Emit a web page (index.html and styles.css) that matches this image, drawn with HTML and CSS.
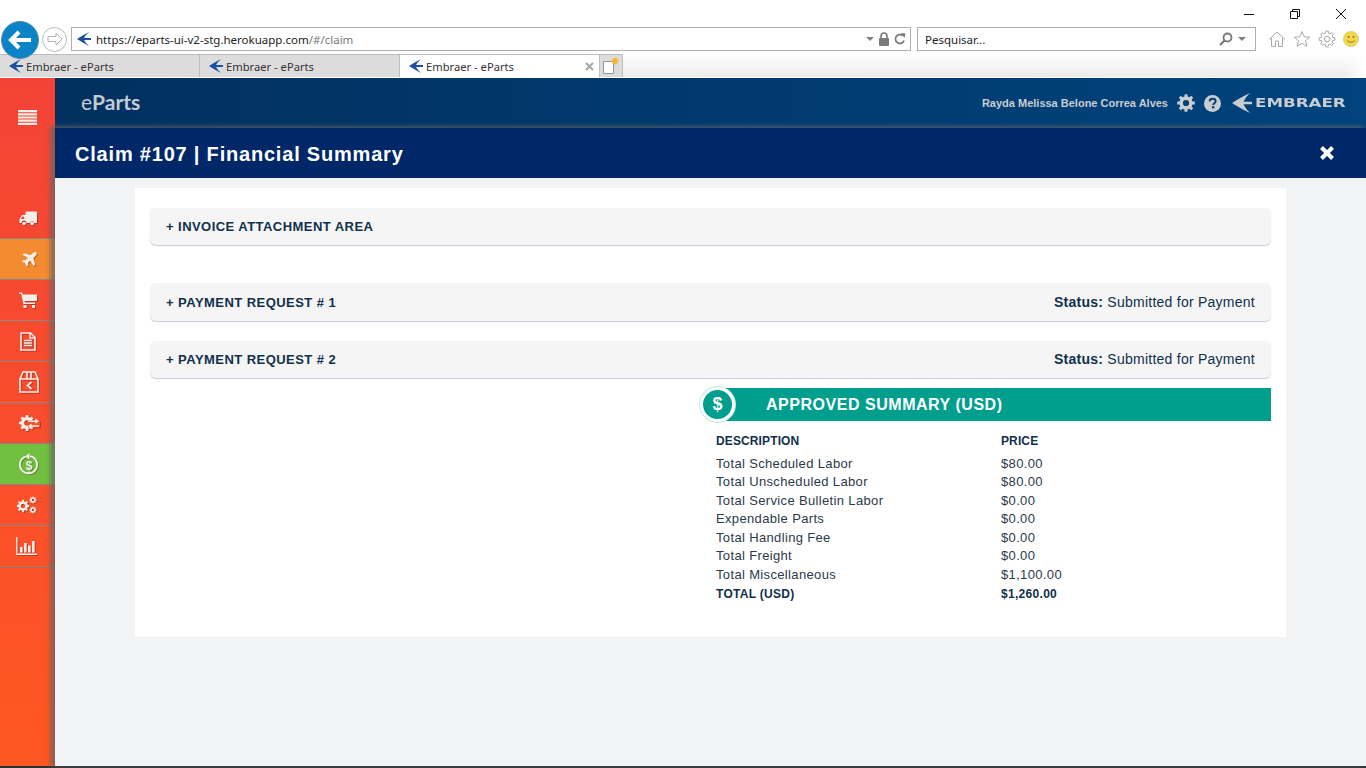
FILE: index.html
```html
<!DOCTYPE html>
<html lang="pt-BR">
<head>
  <meta charset="UTF-8">
  <title>Embraer - eParts</title>
  <link rel="stylesheet" href="styles.css">
</head>
<body>

  <svg class="defs" width="0" height="0">
    <defs>
      <symbol id="fav" viewBox="0 0 15 15">
        <path d="M0 7.5C4 5 8 2.5 13 0C10.5 2 9 4 7.5 6.4H15V8.6H7.5C9 11 10.5 13 13 15C8 12.5 4 10 0 7.5Z" fill="#1c4fa0"/>
      </symbol>
      <symbol id="gear" viewBox="0 0 18 18">
        <path fill-rule="evenodd" fill="currentColor" d="M14.82 7.55L16.9 7.75V10.25L14.82 10.45L14.14 12.09L15.47 13.7L13.7 15.47L12.09 14.14L10.45 14.82L10.25 16.9H7.75L7.55 14.82L5.91 14.14L4.3 15.47L2.53 13.7L3.86 12.09L3.18 10.45L1.1 10.25V7.75L3.18 7.55L3.86 5.91L2.53 4.3L4.3 2.53L5.91 3.86L7.55 3.18L7.75 1.1H10.25L10.45 3.18L12.09 3.86L13.7 2.53L15.47 4.3L14.14 5.91ZM9 6.2A2.8 2.8 0 1 0 9 11.8A2.8 2.8 0 1 0 9 6.2Z"/>
      </symbol>
    </defs>
  </svg>

  <!-- barra do navegador -->
  <div class="browser">
    <div class="win-controls">
      <svg width="12" height="12" viewBox="0 0 12 12"><path d="M1 6.5H11" stroke="#111" fill="none"/></svg>
      <svg width="12" height="12" viewBox="0 0 12 12"><path d="M1.5 3.5H8.5V10.5H1.5ZM3.5 3.5V1.5H10.5V8.5H8.5" stroke="#111" fill="none"/></svg>
      <svg width="12" height="12" viewBox="0 0 12 12"><path d="M1 1L11 11M11 1L1 11" stroke="#111" fill="none"/></svg>
    </div>

    <div class="nav-row">
      <div class="nav-btns">
        <div class="btn-back">
          <svg width="26" height="22" viewBox="0 0 26 22"><path d="M12 3L4 11L12 19M4 11H24" stroke="#fff" stroke-width="4" fill="none"/></svg>
        </div>
        <div class="btn-forward">
          <svg width="16" height="14" viewBox="0 0 16 14"><path d="M9 1L15 7L9 13V9.5H1V4.5H9Z" stroke="#b5b5b5" fill="none"/></svg>
        </div>
      </div>

      <div class="address">
        <svg class="favicon" width="14" height="14"><use href="#fav"/></svg>
        <span class="url">https://eparts-ui-v2-stg.herokuapp.com<span class="url-rest">/#/claim</span></span>
        <span class="caret"></span>
        <svg width="12" height="14" viewBox="0 0 12 14"><path d="M3 6V4a3 3 0 0 1 6 0V6" stroke="#7a7a7a" stroke-width="1.6" fill="none"/><rect x="1" y="6" width="10" height="8" rx="1" fill="#7a7a7a"/></svg>
        <svg width="12" height="12" viewBox="0 0 12 12"><path d="M10 7.5A4.4 4.4 0 1 1 8.6 2.6" stroke="#7a7a7a" stroke-width="1.8" fill="none"/><path d="M7 0L11.5 0.5L10.5 5Z" fill="#7a7a7a"/></svg>
      </div>

      <div class="search">
        <span class="search-text">Pesquisar...</span>
        <svg width="14" height="14" viewBox="0 0 14 14"><circle cx="8.5" cy="5.5" r="4" stroke="#777" stroke-width="1.8" fill="none"/><path d="M5.5 8.5L1 13" stroke="#777" stroke-width="2.2"/></svg>
        <span class="caret"></span>
      </div>

      <div class="tools">
        <svg width="18" height="18" viewBox="0 0 18 18"><path d="M1 9.5L9 2L17 9.5M3.5 8V16.5H7.5V11H10.5V16.5H14.5V8" stroke="#a9a9a9" fill="none"/></svg>
        <svg width="18" height="18" viewBox="0 0 18 18"><path d="M9 1.5L11.2 6.8L16.8 7.2L12.5 10.8L13.9 16.4L9 13.4L4.1 16.4L5.5 10.8L1.2 7.2L6.8 6.8Z" stroke="#a9a9a9" fill="none"/></svg>
        <svg width="18" height="18" viewBox="0 0 18 18"><path fill="none" stroke="#a9a9a9" d="M14.82 7.55L16.9 7.75V10.25L14.82 10.45L14.14 12.09L15.47 13.7L13.7 15.47L12.09 14.14L10.45 14.82L10.25 16.9H7.75L7.55 14.82L5.91 14.14L4.3 15.47L2.53 13.7L3.86 12.09L3.18 10.45L1.1 10.25V7.75L3.18 7.55L3.86 5.91L2.53 4.3L4.3 2.53L5.91 3.86L7.55 3.18L7.75 1.1H10.25L10.45 3.18L12.09 3.86L13.7 2.53L15.47 4.3L14.14 5.91Z"/><circle cx="9" cy="9" r="2.8" fill="none" stroke="#a9a9a9"/></svg>
        <svg width="16" height="16" viewBox="0 0 16 16"><circle cx="8" cy="8" r="7.7" fill="#f2d64b" stroke="#c9c9a0" stroke-width=".6"/><circle cx="5.6" cy="6" r="1" fill="#8a7a20"/><circle cx="10.4" cy="6" r="1" fill="#8a7a20"/><path d="M4.4 9.6Q8 13 11.6 9.6" stroke="#8a7a20" fill="none"/></svg>
      </div>
    </div>

    <div class="tab-row">
      <div class="tab">
        <svg width="14" height="14"><use href="#fav"/></svg>
        <span>Embraer - eParts</span>
      </div>
      <div class="tab">
        <svg width="14" height="14"><use href="#fav"/></svg>
        <span>Embraer - eParts</span>
      </div>
      <div class="tab tab-ativa">
        <svg width="14" height="14"><use href="#fav"/></svg>
        <span>Embraer - eParts</span>
        <svg class="tab-close" width="9" height="9" viewBox="0 0 9 9"><path d="M1 1L8 8M8 1L1 8" stroke="#a8a8a8" stroke-width="2"/></svg>
      </div>
      <div class="tab-new">
        <svg width="18" height="18" viewBox="0 0 18 18"><path d="M1.500 4.500H11.500V16.500H1.500Z" fill="#fff" stroke="#9a9a9a"/><path d="M13 0.500V7.500M9.500 4H16.500M10.600 1.500L15.400 6.500M15.400 1.500L10.600 6.500" stroke="#f4b324" stroke-width="1.4"/></svg>
      </div>
    </div>
  </div>

  <div class="app">
    <nav class="sidebar">
      <div class="menu-toggle">
        <svg width="19" height="15" viewBox="0 0 19 15"><path d="M0 0H19V2.2H0ZM0 3.2H19V5.4H0ZM0 6.4H19V8.6H0ZM0 9.6H19V11.8H0ZM0 12.8H19V15H0Z" fill="#f6eeea"/></svg>
      </div>

      <div class="side-item">
        <svg width="18" height="15" viewBox="0 0 18 15"><path d="M6.5 1.5Q6.5 0.5 7.5 0.5H17Q18 0.5 18 1.5V12H15.5A2.5 2.5 0 0 0 11 12H7.5A2.5 2.5 0 0 0 2.5 12H0.5V8L3 4H6.5Z" fill="currentColor"/><circle cx="5" cy="12.5" r="1.8" fill="currentColor"/><circle cx="13.2" cy="12.5" r="1.8" fill="currentColor"/><path d="M3.5 5.5H5.2V8H1.8Z" fill="#f44a35"/></svg>
      </div>
      <div class="side-item item-laranja">
        <svg class="icon-direita" width="15" height="15" viewBox="0 0 15 15"><path d="M14.5 0.5C13.5 -0.5 11.8 0 10.4 1.4L8.6 3.2L2.2 1.2L0.6 2.8L5.8 6L3.6 8.3L1.4 8L0 9.4L3 11.2L4.8 14.6L6.2 13.2L5.9 10.8L8.2 8.6L11.6 14L13.2 12.4L11.2 6L13.2 4.2C14.6 2.8 15.4 1.4 14.5 0.5Z" fill="currentColor"/></svg>
      </div>
      <div class="side-item">
        <svg width="18" height="16" viewBox="0 0 18 16"><path d="M0 0.5H3L4 2.5H18V9H5.5L6 10.5H16V12H4.5L2.2 2H0Z" fill="currentColor"/><rect x="4.5" y="13" width="3" height="3" fill="currentColor"/><rect x="13" y="13" width="3" height="3" fill="currentColor"/></svg>
      </div>
      <div class="side-item">
        <svg width="16" height="19" viewBox="0 0 16 19"><path d="M1 1H10.5L15 5.5V18H1Z" fill="none" stroke="currentColor" stroke-width="1.6"/><path d="M10 1V6H15M4 8.5H12M4 11H12M4 13.5H12" fill="none" stroke="currentColor" stroke-width="1.4"/></svg>
      </div>
      <div class="side-item">
        <svg class="icon-direita" width="20" height="22" viewBox="0 0 20 22"><path d="M1 8L4 1H16L19 8V21H1ZM1 8H19M8 1V8M12 1V8" fill="none" stroke="currentColor" stroke-width="1.6"/><path d="M12.5 11L8.5 14.5L12.5 18" fill="none" stroke="currentColor" stroke-width="1.8"/></svg>
      </div>
      <div class="side-item">
        <svg class="icon-direita" width="22" height="18" viewBox="0 0 22 18">
          <use href="#gear" width="18" height="18"/>
          <path d="M10 6.6H22V13.4H10Z" fill="#fb4d2a"/>
          <path d="M10 7.2H18M13 12H21" stroke="currentColor" stroke-width="1.6"/>
          <path d="M17.5 4.6L21 7.2L17.5 9.8ZM13.5 9.4L10 12L13.5 14.6Z" fill="currentColor"/>
        </svg>
      </div>
      <div class="side-item item-verde">
        <svg class="icon-direita" width="20" height="22" viewBox="0 0 20 22"><path d="M6.5 3.6A8.6 8.6 0 1 0 11 3.2" fill="none" stroke="currentColor" stroke-width="1.8"/><path d="M10.5 0L6 3.4L10.5 6.4Z" fill="currentColor"/><text class="icon-dolar" x="10" y="16.5" text-anchor="middle">$</text></svg>
      </div>
      <div class="side-item">
        <svg class="icon-esquerda" width="21" height="18" viewBox="0 0 21 18">
          <use href="#gear" x="0" y="3" width="14" height="14"/>
          <use href="#gear" x="13" y="0" width="8" height="8"/>
          <use href="#gear" x="13" y="10" width="8" height="8"/>
        </svg>
      </div>
      <div class="side-item">
        <svg class="icon-esquerda" width="21" height="18" viewBox="0 0 21 18"><path d="M0.8 0V17.2H21" fill="none" stroke="currentColor" stroke-width="1.4"/><path d="M4 10H6.6V15.6H4ZM8 6H10.6V15.6H8ZM12 8.5H14.6V15.6H12ZM16 4H18.6V15.6H16Z" fill="currentColor"/></svg>
      </div>
    </nav>

    <div class="main">
      <header class="topbar">
        <div class="brand"><span class="brand-e">e</span>Parts</div>
        <div class="user-area">
          <span class="user-name">Rayda Melissa Belone Correa Alves</span>
          <svg class="top-gear" width="20" height="20"><use href="#gear"/></svg>
          <svg width="17" height="17" viewBox="0 0 17 17"><circle cx="8.5" cy="8.5" r="8.5" fill="#c9cdd1"/><path d="M5.6 6.4C5.8 4.6 7 3.8 8.6 3.8C10.4 3.8 11.6 4.8 11.6 6.2C11.6 8.2 9.2 8.2 9.2 10" fill="none" stroke="#0a3d6e" stroke-width="2"/><rect x="8" y="11.2" width="2.4" height="2.2" fill="#0a3d6e"/></svg>
          <div class="logo">
            <svg width="20" height="20" viewBox="0 0 20 20"><path d="M0 10C5 7 11 3 18 0C15 3 13 5.5 11.5 8.7H20V11.3H11.5C13 14.5 15 17 18 20C11 17 5 13 0 10Z" fill="#c9cdd1"/></svg>
            <span class="logo-text">EMBRAER</span>
          </div>
        </div>
      </header>

      <section class="panel">
        <div class="panel-title">
          <h1>Claim #107 | Financial Summary</h1>
          <svg width="16" height="16" viewBox="0 0 16 16"><path d="M2.5 2.5L13.5 13.5M13.5 2.5L2.5 13.5" stroke="#fff" stroke-width="4"/></svg>
        </div>

        <div class="panel-body">
          <div class="card">
            <div class="acordeao acordeao-invoice">
              <span class="acordeao-titulo">+ INVOICE ATTACHMENT AREA</span>
            </div>
            <div class="acordeao acordeao-req1">
              <span class="acordeao-titulo">+ PAYMENT REQUEST # 1</span>
              <span class="status"><b>Status:</b> Submitted for Payment</span>
            </div>
            <div class="acordeao acordeao-req2">
              <span class="acordeao-titulo">+ PAYMENT REQUEST # 2</span>
              <span class="status"><b>Status:</b> Submitted for Payment</span>
            </div>

            <div class="resumo">
              <div class="resumo-head">
                <div class="resumo-icone">$</div>
                <h2>APPROVED SUMMARY (USD)</h2>
              </div>
              <div class="resumo-cols resumo-titulos">
                <span>DESCRIPTION</span><span>PRICE</span>
              </div>
              <div class="resumo-cols"><span>Total Scheduled Labor</span><span>$80.00</span></div>
              <div class="resumo-cols"><span>Total Unscheduled Labor</span><span>$80.00</span></div>
              <div class="resumo-cols"><span>Total Service Bulletin Labor</span><span>$0.00</span></div>
              <div class="resumo-cols"><span>Expendable Parts</span><span>$0.00</span></div>
              <div class="resumo-cols"><span>Total Handling Fee</span><span>$0.00</span></div>
              <div class="resumo-cols"><span>Total Freight</span><span>$0.00</span></div>
              <div class="resumo-cols"><span>Total Miscellaneous</span><span>$1,100.00</span></div>
              <div class="resumo-cols resumo-total"><span>TOTAL (USD)</span><span>$1,260.00</span></div>
            </div>
          </div>
        </div>
      </section>
    </div>
  </div>

</body>
</html>
```

FILE: styles.css
```css
* {
  box-sizing: border-box;
}

html, body {
  height: 100%;
}

body {
  margin: 0;
  height: 768px;
  overflow: hidden;
  display: flex;
  flex-direction: column;
  font-family: "Liberation Sans", Arial, sans-serif;
  background-color: #fff;
}

.defs {
  position: absolute;
}

/* navegador */
.browser {
  height: 78px;
  flex: none;
  background-color: #fff;
  font-family: "Noto Sans", sans-serif;
  font-size: 11.5px;
  color: #222;
}

.win-controls {
  height: 27px;
  display: flex;
  justify-content: flex-end;
  gap: 34px;
  padding: 8px 19px 0 0;
}

.nav-row {
  height: 24px;
  display: flex;
  align-items: center;
}

.nav-btns {
  width: 71px;
  height: 24px;
  flex: none;
  display: flex;
  align-items: center;
  padding-left: 1px;
  gap: 3px;
}

.btn-back {
  width: 38px;
  height: 38px;
  flex: none;
  margin-top: 1px;
  border-radius: 50%;
  background-color: #0a84c6;
  border: 1px solid #5a8aa8;
  display: flex;
  align-items: center;
  justify-content: center;
  position: relative;
  z-index: 2;
}

.btn-forward {
  width: 25px;
  height: 25px;
  flex: none;
  border-radius: 50%;
  border: 1px solid #bbb;
  display: flex;
  align-items: center;
  justify-content: center;
}

.address {
  width: 840px;
  height: 24px;
  border: 1px solid #aeaeae;
  display: flex;
  align-items: center;
  gap: 4px;
  padding: 0 4px 0 5px;
}

.favicon {
  flex: none;
  margin-right: 1px;
}

.url {
  flex: 1;
  color: #222;
}

.url-rest {
  color: #777;
}

.caret {
  width: 0;
  height: 0;
  border-left: 4px solid transparent;
  border-right: 4px solid transparent;
  border-top: 4px solid #808080;
}

.search {
  width: 339px;
  height: 24px;
  margin-left: 6px;
  border: 1px solid #aeaeae;
  display: flex;
  align-items: center;
  gap: 5px;
  padding: 0 9px 0 7px;
}

.search-text {
  flex: 1;
}

.tools {
  display: flex;
  align-items: center;
  gap: 7px;
  padding-left: 12px;
}

.tab-row {
  height: 24px;
  margin-top: 3px;
  display: flex;
  font-size: 11.2px;
  background: linear-gradient(90deg, transparent 98.5%, #fff), linear-gradient(#fff, #ececec);
  border-bottom: 1px solid #fff;
}

.tab {
  width: 200px;
  height: 23px;
  display: flex;
  align-items: center;
  gap: 3px;
  padding-left: 9px;
  background-color: #dcdcdc;
  border: 1px solid #bdbdbd;
  border-bottom: none;
  border-left: none;
  color: #333;
}

.tab-ativa {
  background-color: #fff;
}

.tab-ativa span {
  flex: 1;
}

.tab-close {
  margin-right: 5px;
}

.tab-new {
  width: 23px;
  height: 23px;
  background-color: #dcdcdc;
  border: 1px solid #bdbdbd;
  border-bottom: none;
  border-left: none;
  display: flex;
  align-items: center;
  justify-content: center;
}

/* aplicacao */
.app {
  flex: 1;
  display: flex;
  min-height: 0;
  border-bottom: 2px solid #2e3033;
}

.sidebar {
  width: 55px;
  flex: none;
  background: linear-gradient(#f44336, #ff5722);
  color: #f6eeea;
}

.menu-toggle {
  height: 120px;
  display: flex;
  justify-content: center;
  align-items: flex-start;
  padding-top: 32px;
}

.side-item {
  height: 41px;
  display: flex;
  align-items: center;
  justify-content: center;
  border-bottom: 1px solid #8a8a80;
}

.side-item svg {
  filter: drop-shadow(1px 1px 0 rgba(0,0,0,0.25));
}

.icon-direita {
  margin-left: 3px;
}

.icon-esquerda {
  margin-right: 3px;
}

.item-laranja {
  background-color: #f48b30;
}

.item-verde {
  background-color: #71bf3e;
}

.icon-dolar {
  font-family: "Liberation Sans", sans-serif;
  font-weight: bold;
  font-size: 12px;
  fill: currentColor;
}

.main {
  flex: 1;
  min-width: 0;
  display: flex;
  flex-direction: column;
}

.topbar {
  height: 50px;
  flex: none;
  display: flex;
  justify-content: space-between;
  align-items: center;
  padding: 0 21px 0 26px;
  background: linear-gradient(90deg, #02305f, #00437d);
}

.brand {
  padding-bottom: 3px;
  font-family: "Lato", sans-serif;
  font-weight: bold;
  font-size: 21px;
  color: #c3cbd3;
}

.brand-e {
  font-weight: normal;
}

.user-area {
  display: flex;
  align-items: center;
  gap: 8px;
  color: #c9cdd1;
}

.user-name {
  font-size: 11px;
  font-weight: bold;
}

.top-gear {
  color: #c9cdd1;
}

.logo {
  width: 113px;
  margin-left: 3px;
  display: flex;
  align-items: center;
  gap: 3px;
}

.logo-text {
  font-family: "DejaVu Sans", sans-serif;
  font-weight: bold;
  font-size: 12px;
  transform: scaleX(1.39);
  transform-origin: left center;
}

.panel {
  flex: 1;
  min-height: 0;
  display: flex;
  flex-direction: column;
  background-color: #f2f3f5;
  box-shadow: -4px -1px 4px 1px rgba(100,100,100,0.72);
  position: relative;
}

.panel-title {
  height: 50px;
  flex: none;
  display: flex;
  justify-content: space-between;
  align-items: center;
  padding: 0 31px 0 20px;
  background-color: #002868;
  color: white;
}

h1 {
  margin: 0;
  padding-top: 2px;
  font-size: 20px;
  letter-spacing: 0.8px;
}

.panel-body {
  padding: 10px 80px 0;
}

.card {
  height: 449px;
  padding: 20px 15px 0;
  background-color: #fff;
}

.acordeao {
  height: 37px;
  display: flex;
  justify-content: space-between;
  align-items: center;
  padding: 0 16px;
  margin-bottom: 20px;
  background-color: #f5f5f5;
  border-radius: 6px;
  box-shadow: 0 1px 1px #c3cbdc;
  color: #10304c;
  font-size: 14px;
}

.acordeao-invoice {
  margin-bottom: 38px;
  padding-bottom: 1px;
}

.acordeao-req1 {
  height: 38px;
}

.acordeao-req2 {
  margin-bottom: 10px;
  padding-bottom: 1px;
}

.acordeao-titulo {
  font-size: 13px;
  font-weight: bold;
  letter-spacing: 0.45px;
}

.status {
  letter-spacing: 0.25px;
}

.resumo {
  width: 571px;
  margin-left: auto;
}

.resumo-head {
  height: 33px;
  margin: 0 0 11px 17px;
  display: flex;
  align-items: center;
  background-color: #009e8c;
  position: relative;
}

.resumo-head h2 {
  margin: 0 0 0 49px;
  font-size: 16px;
  letter-spacing: 0.53px;
  color: white;
}

.resumo-icone {
  position: absolute;
  left: -17px;
  top: -1px;
  width: 35px;
  height: 35px;
  border-radius: 50%;
  background-color: #009e8c;
  border: 3px solid #fff;
  box-shadow: 0 0 0 1px #c4e8e2;
  color: #fff;
  font-weight: bold;
  font-size: 18px;
  display: flex;
  align-items: center;
  justify-content: center;
}

.resumo-cols {
  display: grid;
  grid-template-columns: 285px 1fr;
  padding-left: 16px;
  font-size: 13px;
  line-height: 18.57px;
  letter-spacing: 0.35px;
  color: #2b3a4a;
}

.resumo-titulos {
  margin-bottom: 4px;
  font-size: 12px;
  font-weight: bold;
  letter-spacing: 0.12px;
  color: #10304c;
}

.resumo-total {
  font-size: 12px;
  font-weight: bold;
  letter-spacing: 0.3px;
  color: #10304c;
}
```
